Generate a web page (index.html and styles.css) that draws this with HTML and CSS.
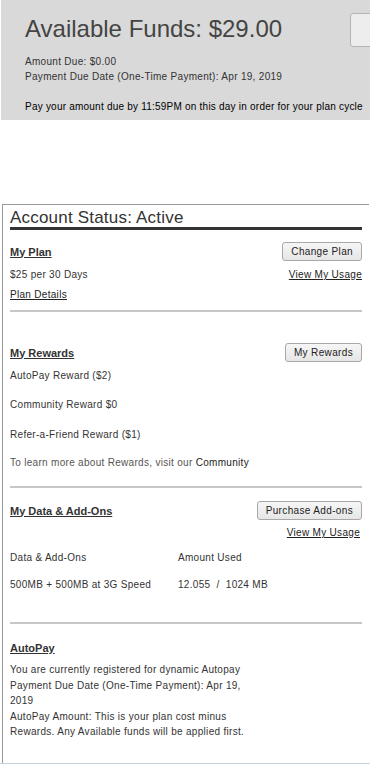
FILE: index.html
```html
<!DOCTYPE html>
<html>
<head>
	<meta name="viewport" content="width=device-width, initial-scale=1">
	<title>Account</title>
	<link rel="stylesheet" href="styles.css">
</head>
<body>
	<div class="funds">
		<div class="funds-top">
			<h1>Available Funds: $29.00</h1>
			<button class="btn funds-btn" aria-label="Add Funds"></button>
		</div>
		<div class="funds-line">Amount Due: $0.00</div>
		<div class="funds-line">Payment Due Date (One-Time Payment): Apr 19, 2019</div>
		<div class="funds-note">Pay your amount due by 11:59PM on this day in order for your plan cycle</div>
	</div>

	<div class="card">
		<h2>Account Status: Active</h2>

		<div class="section plan">
			<div class="row head-row">
				<a class="sec-title" href="#">My Plan</a>
				<button class="btn">Change Plan</button>
			</div>
			<div class="row line r1">
				<span>$25 per 30 Days</span>
				<a href="#">View My Usage</a>
			</div>
			<div class="line r2"><a href="#">Plan Details</a></div>
		</div>

		<div class="section rewards">
			<div class="row head-row">
				<a class="sec-title" href="#">My Rewards</a>
				<button class="btn">My Rewards</button>
			</div>
			<div class="line r1">AutoPay Reward ($2)</div>
			<div class="line r2">Community Reward $0</div>
			<div class="line r3">Refer-a-Friend Reward ($1)</div>
			<div class="line r4 muted">To learn more about Rewards, visit our <span class="dark">Community</span></div>
		</div>

		<div class="section data">
			<div class="row head-row">
				<a class="sec-title" href="#">My Data &amp; Add-Ons</a>
				<button class="btn">Purchase Add-ons</button>
			</div>
			<div class="line usage"><a href="#">View My Usage</a></div>
			<div class="cols line r1">
				<span>Data &amp; Add-Ons</span>
				<span>Amount Used</span>
			</div>
			<div class="cols line r2">
				<span>500MB + 500MB at 3G Speed</span>
				<span>12.055 &nbsp;/ &nbsp;1024 MB</span>
			</div>
		</div>

		<div class="section autopay">
			<a class="sec-title" href="#">AutoPay</a>
			<p>You are currently registered for dynamic Autopay<br>
			Payment Due Date (One-Time Payment): Apr 19, 2019<br>
			AutoPay Amount: This is your plan cost minus Rewards. Any Available funds will be applied first.</p>
		</div>
	</div>
	<div class="footer"></div>
</body>
</html>
```

FILE: styles.css
```css
body {
	margin: 0;
	padding: 0;
	width: 370px;
	overflow: hidden;
	font-family: "Liberation Sans", Arial, sans-serif;
	font-size: 10px;
	color: #333;
	background-color: #ffffff;
}
a {
	color: #222;
}

/* available funds panel */
.funds {
	margin-left: 1px;
	height: 120px;
	padding: 17px 0 0 24px;
	box-sizing: border-box;
	overflow: hidden;
	background-color: #d9d9d9;
	white-space: nowrap;
}
.funds-top {
	display: flex;
	align-items: flex-start;
	height: 24px;
}
.funds h1 {
	margin: 0;
	font-size: 24px;
	font-weight: normal;
	line-height: 24px;
	color: #444;
}
.btn.funds-btn {
	flex-shrink: 0;
	margin: -4px 0 0 68px;
	height: 34px;
	width: 90px;
	background: #eeeded;
	border-color: #b4b4b4;
}
.funds-line {
	letter-spacing: 0.3px;
	line-height: 15px;
	color: #333;
}
.funds-top + .funds-line {
	margin-top: 13px;
}
.funds-note {
	margin-top: 15px;
	line-height: 15px;
	letter-spacing: 0.22px;
	color: #000;
}

/* account card */
.card {
	margin: 84px 0 0 2px;
	width: 352px;
	padding: 4px 7px 23px 7px;
	border-top: 1px solid #999;
	border-left: 1px solid #999;
}
.card h2 {
	margin: 0;
	font-size: 17px;
	font-weight: normal;
	line-height: 18px;
	letter-spacing: 0.2px;
	color: #333;
	border-bottom: 3px solid #333;
}
.section {
	border-bottom: 2px solid #c8c8c8;
}
.section.autopay {
	border-bottom: none;
}
.row {
	display: flex;
	justify-content: space-between;
	align-items: center;
}
.line {
	line-height: 16px;
	letter-spacing: 0.3px;
}
.sec-title {
	font-size: 11px;
	font-weight: bold;
	color: #333;
}
.btn {
	height: 19px;
	padding: 0 8px;
	font-family: "Liberation Sans", Arial, sans-serif;
	font-size: 10px;
	letter-spacing: 0.35px;
	color: #222;
	background: linear-gradient(#f6f6f6, #e6e6e6);
	border: 1px solid #a8a8a8;
	border-radius: 3px;
}
.head-row {
	height: 19px;
}

.plan .head-row { margin-top: 12px; }
.plan .r1 { margin-top: 6px; }
.plan .r2 { margin-top: 4px; padding-bottom: 7px; }

.rewards .head-row { margin-top: 31px; }
.rewards .r1 { margin-top: 6px; }
.rewards .r2 { margin-top: 13px; }
.rewards .r3 { margin-top: 14px; }
.rewards .r4 { margin-top: 12px; padding-bottom: 15px; }
.muted { color: #555; }
.dark { color: #222; }

.data .head-row { margin-top: 13px; }
.data .usage { margin-top: 5px; text-align: right; padding-right: 2px; }
.data .r1 { margin-top: 9px; }
.data .r2 { margin-top: 11px; padding-bottom: 29px; }
.cols {
	display: grid;
	grid-template-columns: 168px 1fr;
}

.autopay .sec-title {
	display: block;
	margin-top: 16px;
	line-height: 16px;
}
.autopay p {
	margin: 6px 0 0;
	width: 245px;
	line-height: 15.5px;
	letter-spacing: 0.3px;
}

.footer {
	border-top: 2px solid #c6d4e2;
}
```
